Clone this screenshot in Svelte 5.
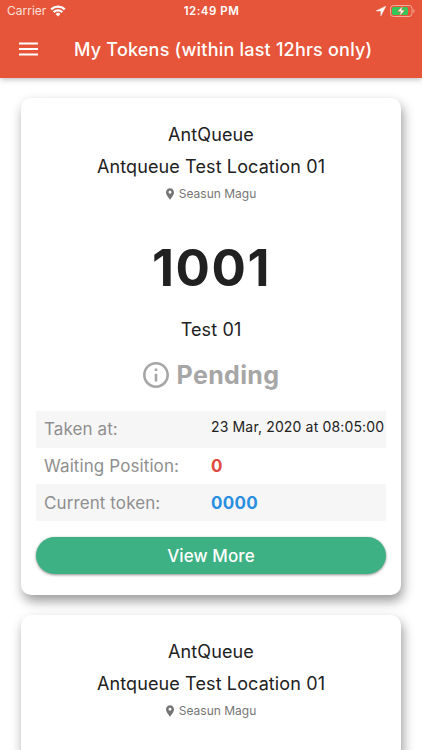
<script lang="ts">
  interface Token {
    company: string;
    location: string;
    place: string;
    number: string;
    service: string;
    status: string;
    takenAt: string;
    waiting: number;
    current: string;
  }

  const token: Token = {
    company: 'AntQueue',
    location: 'Antqueue Test Location 01',
    place: 'Seasun Magu',
    number: '1001',
    service: 'Test 01',
    status: 'Pending',
    takenAt: '23 Mar, 2020 at 08:05:00',
    waiting: 0,
    current: '0000'
  };

  let tokens = $state<Token[]>([token, { ...token }]);
</script>

<div class="screen">
  <header>
    <div class="status-bar">
      <div class="carrier">
        <span class="carrier-name">Carrier</span>
        <svg width="16" height="12" viewBox="0 0 16 12" fill="none" stroke="#fff" stroke-width="2.3">
          <path d="M1.2 4.4a9.8 9.8 0 0 1 13.6 0" />
          <path d="M3.7 7.1a6.2 6.2 0 0 1 8.6 0" />
          <path d="M8 11.4 5.6 9a3.4 3.4 0 0 1 4.8 0z" fill="#fff" stroke="none" />
        </svg>
      </div>
      <span class="time">12:49 PM</span>
      <div class="indicators">
        <svg width="10" height="10" viewBox="0 0 10 10">
          <path d="M9.8.2.2 4.9h4.7v4.9z" fill="#fff" stroke="#fff" stroke-width=".5" />
        </svg>
        <svg class="battery" width="26" height="12" viewBox="0 0 26 12">
          <rect x=".5" y=".5" width="21.5" height="11" rx="3" fill="none" stroke="#f3aa9b" />
          <rect x="2" y="2" width="16" height="8" rx="1.5" fill="#35c759" />
          <path d="M23.3 4v4c1.6-.6 1.6-3.4 0-4z" fill="#f3aa9b" />
          <path d="M12.6 1 7.4 6.6h3.3L9.5 11l5.4-5.8h-3.4z" fill="#fff" stroke="#e65539" stroke-width=".5" />
        </svg>
      </div>
    </div>
    <div class="app-bar">
      <button class="menu" aria-label="Menu">
        <svg width="19" height="14" viewBox="0 0 19 14">
          <path d="M0 1.5h19M0 7h19M0 12.5h19" stroke="#fff" stroke-width="2.1" />
        </svg>
      </button>
      <h1>My Tokens (within last 12hrs only)</h1>
    </div>
  </header>

  <main>
    {#each tokens as t}
      <article class="card">
        <div class="company">{t.company}</div>
        <div class="location">{t.location}</div>
        <div class="place">
          <svg width="8" height="12" viewBox="5 2 14 20">
            <path
              d="M12 2C8.13 2 5 5.13 5 9c0 5.25 7 13 7 13s7-7.75 7-13c0-3.87-3.13-7-7-7zm0 9.5a2.5 2.5 0 1 1 0-5 2.5 2.5 0 0 1 0 5z"
              fill="#757575"
            />
          </svg>
          <span>{t.place}</span>
        </div>
        <div class="number">{t.number}</div>
        <div class="service">{t.service}</div>
        <div class="status">
          <svg width="26" height="26" viewBox="2 2 20 20">
            <path
              d="M11 7h2v2h-2zm0 4h2v6h-2zm1-9C6.48 2 2 6.48 2 12s4.48 10 10 10 10-4.48 10-10S17.52 2 12 2zm0 18c-4.41 0-8-3.59-8-8s3.59-8 8-8 8 3.59 8 8-3.59 8-8 8z"
              fill="#a6a6a6"
            />
          </svg>
          <span>{t.status}</span>
        </div>
        <div class="details">
          <div class="row">
            <span class="label">Taken at:</span>
            <span class="date">{t.takenAt}</span>
          </div>
          <div class="row">
            <span class="label">Waiting Position:</span>
            <span class="value waiting">{t.waiting}</span>
          </div>
          <div class="row">
            <span class="label">Current token:</span>
            <span class="value current">{t.current}</span>
          </div>
        </div>
        <button class="more">View More</button>
      </article>
    {/each}
  </main>
</div>

<style>
  .screen {
    height: 750px;
    overflow: hidden;
    display: flex;
    flex-direction: column;
    background: #fff;
    color: #212121;
    font-family: Inter, 'Liberation Sans', sans-serif;
  }

  header {
    flex: none;
    height: 78px;
    background: #e65539;
    color: #fff;
    box-shadow: 0 1px 6px rgba(0, 0, 0, 0.3);
    z-index: 1;
  }

  .status-bar {
    display: grid;
    grid-template-columns: 1fr auto 1fr;
    align-items: center;
    height: 22px;
    padding: 0 6px 0 7px;
    font-size: 12px;
    line-height: 22px;
  }

  .carrier {
    display: flex;
    align-items: center;
    gap: 4px;
    color: #fbe0da;
  }

  .time {
    font-size: 11.5px;
    font-weight: 600;
    letter-spacing: 0.5px;
  }

  .indicators {
    display: flex;
    justify-content: flex-end;
    align-items: center;
    gap: 4px;
  }

  .app-bar {
    display: flex;
    align-items: center;
    height: 54px;
    padding-left: 19px;
  }

  .menu {
    display: flex;
    padding: 0;
    border: 0;
    background: none;
  }

  h1 {
    margin: 0 0 0 36px;
    font-size: 18px;
    font-weight: 500;
    letter-spacing: 0.21px;
    white-space: nowrap;
  }

  main {
    padding: 20px 21px 0;
  }

  .card {
    display: flex;
    flex-direction: column;
    height: 497px;
    margin-bottom: 20px;
    padding: 21px 15px;
    box-sizing: border-box;
    border-radius: 10px;
    background: #fff;
    box-shadow: 2px 6px 12px rgba(0, 0, 0, 0.4);
    text-align: center;
  }

  .company,
  .location,
  .service {
    font-size: 18px;
    letter-spacing: 0.12px;
    line-height: 32px;
  }

  .company {
    line-height: 31px;
  }

  .location {
    line-height: 33px;
  }

  .place {
    display: flex;
    justify-content: center;
    align-items: center;
    gap: 5px;
    height: 21px;
    color: #757575;
    font-size: 12px;
  }

  .number {
    margin-top: 33px;
    padding-left: 1px;
    font-size: 51px;
    font-weight: 700;
    letter-spacing: 1.6px;
    line-height: 62px;
  }

  .service {
    margin-top: 15px;
  }

  .status {
    display: flex;
    justify-content: center;
    align-items: center;
    gap: 8px;
    height: 40px;
    margin-top: 9px;
    color: #a6a6a6;
    font-size: 25px;
    font-weight: 700;
    letter-spacing: 0.35px;
  }

  .details {
    display: grid;
    grid-template-rows: repeat(3, 1fr);
    height: 110px;
    margin-top: 16px;
    text-align: left;
  }

  .row {
    display: grid;
    grid-template-columns: 167px 1fr;
    align-items: center;
    padding-left: 8px;
    white-space: nowrap;
  }

  .row:nth-child(odd) {
    background: #f6f6f6;
  }

  .label {
    color: #8f8f8f;
    font-size: 17px;
    letter-spacing: 0.1px;
  }

  .date {
    padding-bottom: 5px;
    font-size: 14px;
    letter-spacing: 0.15px;
  }

  .value {
    font-size: 17px;
    font-weight: 700;
    letter-spacing: 0.3px;
  }

  .waiting {
    color: #e04a3f;
  }

  .current {
    color: #2a8fe0;
  }

  .more {
    height: 37px;
    margin-top: 16px;
    padding: 0;
    border: 0;
    border-radius: 19px;
    background: #3db183;
    color: #fff;
    font-family: inherit;
    font-size: 17px;
    font-weight: 500;
    letter-spacing: 0.1px;
    box-shadow: 0 1px 3px rgba(0, 0, 0, 0.45);
  }
</style>
